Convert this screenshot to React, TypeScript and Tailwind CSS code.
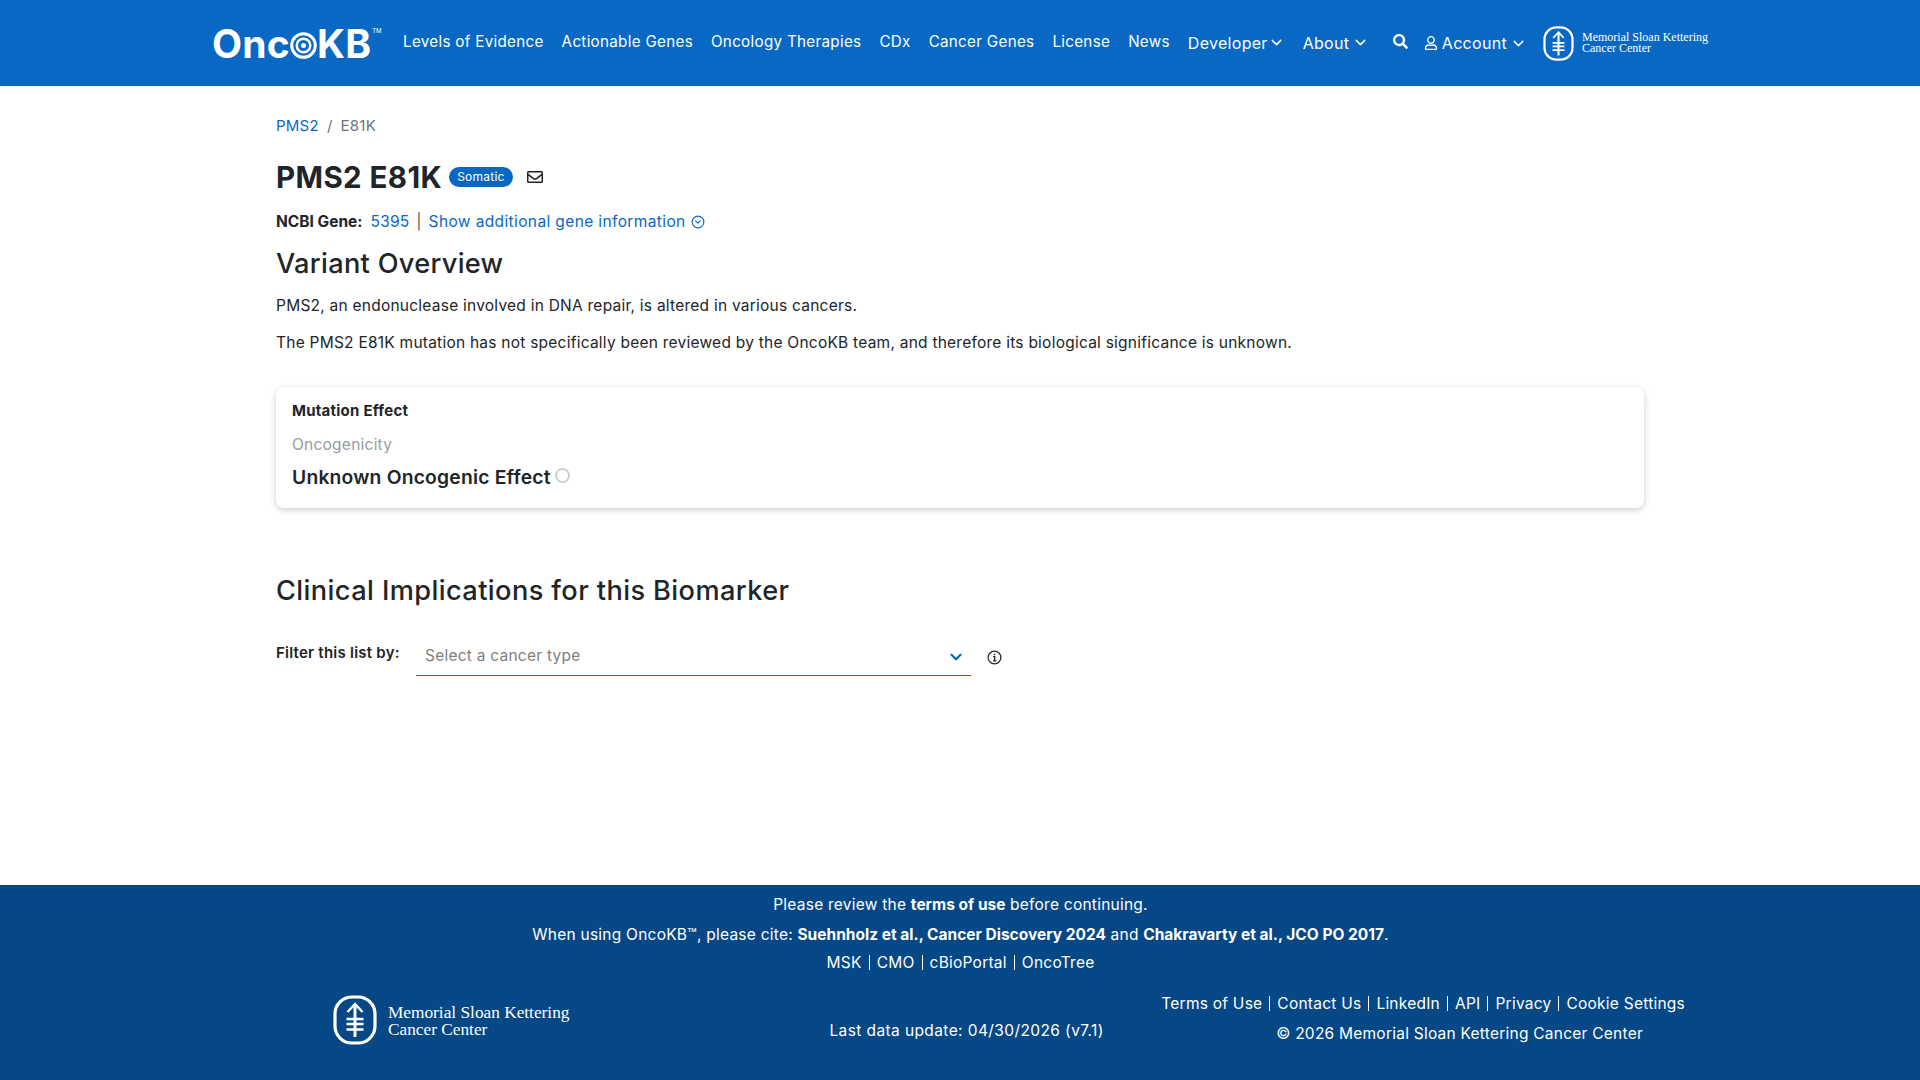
import { ChevronDown, CircleChevronDown } from "lucide-react";
import { FaRegEnvelope, FaRegUser, FaSearch } from "react-icons/fa";

const navLinks = ["Levels of Evidence", "Actionable Genes", "Oncology Therapies", "CDx", "Cancer Genes", "License", "News"];

function MskMark({ className }: { className: string }) {
  return (
    <svg viewBox="0 0 44 50" className={className} fill="none" stroke="currentColor">
      <rect x="2" y="2" width="40" height="46" rx="17" ry="17" strokeWidth="3.2" />
      <path d="M22 9V42" strokeWidth="3" />
      <path d="M14.5 17L22 9L29.5 17M13.5 24H30.5M13.5 29H30.5M13.5 34.5H30.5" strokeWidth="2.4" />
    </svg>
  );
}

function OncoLogo() {
  return (
    <div className="flex w-[169px] shrink-0 items-center font-['Inter',sans-serif] text-[39px] leading-none font-bold tracking-[0.2px] text-white">
      <span>Onc</span>
      <svg viewBox="0 0 32 32" className="mt-[5px] h-[27px] w-[27px] shrink-0" fill="none" stroke="currentColor">
        <circle cx="16" cy="16" r="14" strokeWidth="3.5" />
        <circle cx="16" cy="16" r="8" strokeWidth="3" />
        <circle cx="16" cy="16" r="3" fill="currentColor" stroke="none" />
      </svg>
      <span>KB</span>
      <span className="mb-[24px] ml-[1px] text-[6px] font-normal tracking-normal">TM</span>
    </div>
  );
}

function Pipe() {
  return <span className="mx-[7px] inline-block h-[15px] w-px bg-white align-[-2px]" />;
}

export default function App() {
  return (
    <div className="flex min-h-[1080px] flex-col bg-white font-['Inter',sans-serif] text-[15.5px] tracking-[0.24px] text-[#212529]">
      <header className="flex h-[86px] items-center bg-[#0968c3] pr-[212px] pl-[212px] text-white">
        <OncoLogo />
        <nav className="ml-[22px] flex flex-1 items-center gap-[18px] pb-[2px] text-[15.2px] tracking-[0.3px]">
          {navLinks.map((link) => (
            <a key={link} className="whitespace-nowrap">{link}</a>
          ))}
          <a className="flex items-center pt-[1px] text-[16px] whitespace-nowrap">Developer<ChevronDown size={17} strokeWidth={2} /></a>
          <a className="flex items-center pt-[1px] text-[16px] whitespace-nowrap">About<ChevronDown size={17} strokeWidth={2} className="ml-[3px]" /></a>
        </nav>
        <FaSearch size={15} className="mr-[16px] mb-[3px]" />
        <a className="mr-[16px] flex items-center text-[16px] tracking-[0.3px] whitespace-nowrap">
          <FaRegUser size={14} className="mr-[4px]" />Account<ChevronDown size={17} className="ml-[3px]" />
        </a>
        <div className="flex items-center">
          <MskMark className="h-[35px] w-[31px]" />
          <div className="ml-[8px] font-['Liberation_Serif',serif] text-[12px] leading-[11px] tracking-normal whitespace-nowrap">
            Memorial Sloan Kettering<br />Cancer Center
          </div>
        </div>
      </header>

      <main className="mx-auto w-[1400px] flex-1 px-[16px]">
        <div className="mt-[29px] flex h-[22px] items-center text-[15px]">
          <a className="text-[#0968c3]">PMS2</a>
          <span className="mx-[8px] text-[#6c757d]">/</span>
          <span className="text-[#6c757d]">E81K</span>
        </div>
        <div className="mt-[18px] flex h-[44px] items-center">
          <h1 className="text-[29.5px] font-bold tracking-[0.4px]">PMS2 E81K</h1>
          <span className="ml-[7px] rounded-full bg-[#0968c3] px-[8px] py-[1px] text-[12px] text-white">Somatic</span>
          <FaRegEnvelope size={16} className="ml-[14px]" />
        </div>
        <div className="mt-[11px] flex h-[24px] items-center">
          <b className="font-bold tracking-normal">NCBI Gene:</b>
          <a className="ml-[8px] text-[#0968c3]">5395</a>
          <span className="mx-[7px] font-light">|</span>
          <a className="tracking-[0.38px] text-[#0968c3]">Show additional gene information</a>
          <CircleChevronDown size={14} className="ml-[5px] text-[#0968c3]" />
        </div>
        <h2 className="mt-[12px] text-[27.2px] leading-[36px] font-medium tracking-[0.3px]">Variant Overview</h2>
        <p className="mt-[12px] leading-[24px]">PMS2, an endonuclease involved in DNA repair, is altered in various cancers.</p>
        <p className="mt-[13px] leading-[24px]">The PMS2 E81K mutation has not specifically been reviewed by the OncoKB team, and therefore its biological significance is unknown.</p>
        <section className="mt-[32px] h-[121px] rounded-[8px] px-[16px] pt-[13px] shadow-[0_2px_6px_rgba(0,0,0,0.2)]">
          <div className="text-[15px] leading-[22px] font-bold">Mutation Effect</div>
          <div className="mt-[12px] leading-[22px] text-[#9a9aa2]">Oncogenicity</div>
          <div className="mt-[6px] flex items-start text-[19.3px] leading-[30px] font-semibold tracking-[0.2px]">
            Unknown Oncogenic Effect
            <span className="mt-[6px] ml-[4px] h-[15px] w-[15px] rounded-full border-2 border-[#cfcfcf]" />
          </div>
        </section>
        <h2 className="mt-[65px] text-[27.2px] leading-[36px] font-medium tracking-[0.4px]">Clinical Implications for this Biomarker</h2>
        <div className="mt-[27px] flex items-start">
          <div className="w-[126px] shrink-0 pt-[6px] text-[15px] leading-[22px] font-semibold whitespace-nowrap">Filter this list by:</div>
          <div className="ml-[14px] flex h-[40px] w-[555px] items-center justify-between border-b border-[#0968c3] pt-[1px] pr-[6px] pl-[9px]">
            <span className="text-[#808080]">Select a cancer type</span>
            <ChevronDown size={18} strokeWidth={3} className="mt-[2px] text-[#0968c3]" />
          </div>
          <svg viewBox="0 0 16 16" className="mt-[14px] ml-[16px] h-[15px] w-[15px]" fill="none" stroke="currentColor">
            <circle cx="8" cy="8" r="6.8" strokeWidth="1.3" />
            <path d="M6.5 7H8.2V11.5M6.5 11.5H10M8 4V5.6" strokeWidth="1.4" />
          </svg>
        </div>
      </main>

      <footer className="h-[195px] bg-[#064785] text-white">
        <div className="flex flex-col items-center pt-[8px] pl-[1px]">
          <p className="leading-[24px]">Please review the <b className="tracking-normal">terms of use</b> before continuing.</p>
          <p className="mt-[6px] leading-[24px]">When using OncoKB™, please cite: <b className="tracking-normal">Suehnholz et al., Cancer Discovery 2024</b> and <b className="tracking-normal">Chakravarty et al., JCO PO 2017</b>.</p>
          <p className="mt-[4px] leading-[24px]">MSK<Pipe />CMO<Pipe />cBioPortal<Pipe />OncoTree</p>
        </div>
        <div className="mt-[17px] flex items-start pr-[235px] pl-[333px]">
          <div className="mt-[3px] flex items-center">
            <MskMark className="h-[50px] w-[44px]" />
            <div className="ml-[11px] pt-[2px] font-['Liberation_Serif',serif] text-[17.3px] leading-[17px] tracking-normal whitespace-nowrap">
              Memorial Sloan Kettering<br />Cancer Center
            </div>
          </div>
          <div className="mt-[27px] ml-[260px] tracking-[0.4px] whitespace-nowrap">Last data update: 04/30/2026 (v7.1)</div>
          <div className="ml-auto text-right">
            <p className="leading-[24px] whitespace-nowrap">Terms of Use<Pipe />Contact Us<Pipe />LinkedIn<Pipe />API<Pipe />Privacy<Pipe />Cookie Settings</p>
            <p className="mt-[6px] pr-[42px] leading-[24px] whitespace-nowrap">© 2026 Memorial Sloan Kettering Cancer Center</p>
          </div>
        </div>
      </footer>
    </div>
  );
}
